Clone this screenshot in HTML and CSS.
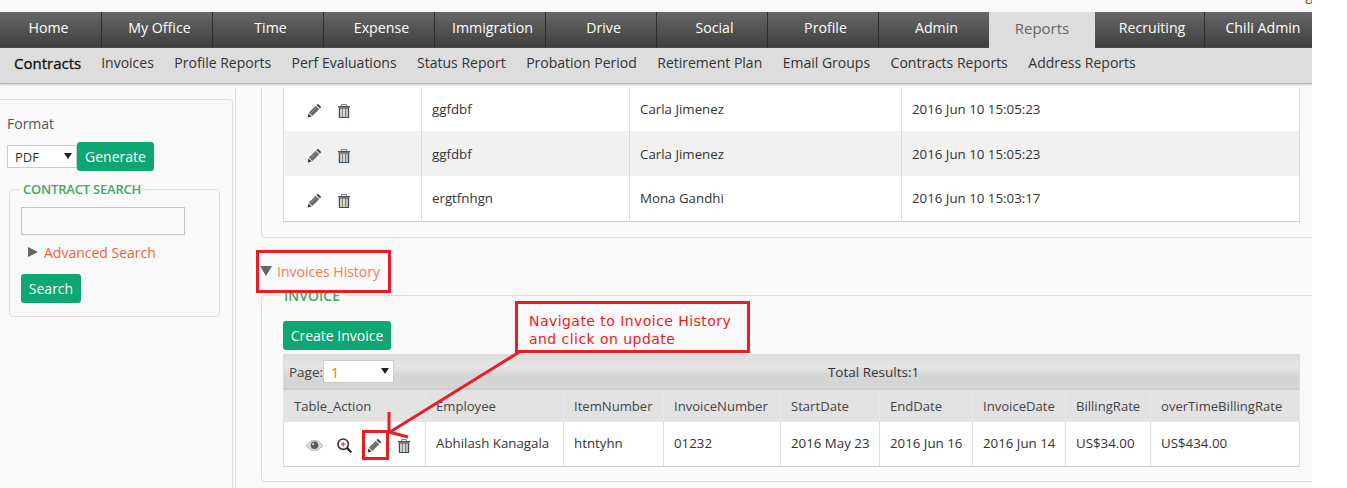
FILE: index.html
```html
<!DOCTYPE html>
<html lang="en">
<head>
    <meta charset="UTF-8">
    <title>Reports - Contracts</title>
    <link rel="stylesheet" href="styles.css">
</head>
<body>
    <svg class="icon-defs" width="0" height="0">
        <symbol id="i-pencil" viewBox="0 0 14 14">
            <path d="M.6 13.400l.9-4 3.100 3.100z" fill="#333"/>
            <path d="M1.900 8.600l6.800-6.800 3.500 3.500-6.800 6.800z" fill="#6a6a6a"/>
            <path d="M3.400 9.400l6-6" stroke="#999" stroke-width=".8"/>
            <path d="M9.400 1.100l.6-.6a1.200 1.200 0 0 1 1.700 0l1.800 1.800a1.200 1.200 0 0 1 0 1.700l-.6.6z" fill="#3a4350"/>
        </symbol>
        <symbol id="i-trash" viewBox="0 0 14 14">
            <path d="M4.600 2V.6h4.800V2" fill="none" stroke="#777" stroke-width="1"/>
            <path d="M1 2h12v1.500H1z" fill="#555"/>
            <path d="M1.800 3.500h10.400V14H1.800z" fill="#34506e"/>
            <path d="M3 4.500h2.400V13H3z" fill="#e0cc98"/>
            <path d="M5.900 4.500h2.200V13H5.900z" fill="#d6d6d6"/>
            <path d="M8.600 4.500H11V13H8.600z" fill="#c4bea6"/>
        </symbol>
        <symbol id="i-eye" viewBox="0 0 17 11">
            <path d="M.5 5.500C3 1.500 6 .5 8.500 .5s5.500 1 8 5c-2.500 4-5.500 5-8 5s-5.500-1-8-5z" fill="#ddd" stroke="#aaa"/>
            <circle cx="8.500" cy="5.300" r="3.800" fill="#5a5a5a"/>
            <circle cx="7.200" cy="4.100" r="1.100" fill="#ddd"/>
        </symbol>
        <symbol id="i-zoom" viewBox="0 0 15 15">
            <circle cx="6.200" cy="6.200" r="5.200" fill="#fff" stroke="#333" stroke-width="1.600"/>
            <path d="M10 10l4.300 4.300" stroke="#222" stroke-width="2.200"/>
            <path d="M4 6.200h4.400M6.200 4v4.400" stroke="#a04a80" stroke-width="1.200"/>
        </symbol>
    </svg>

    <div class="page">
        <div class="top-strip"><span class="logout">Log</span></div>

        <nav class="main-nav">
            <a class="tab">Home</a>
            <a class="tab">My Office</a>
            <a class="tab">Time</a>
            <a class="tab">Expense</a>
            <a class="tab">Immigration</a>
            <a class="tab">Drive</a>
            <a class="tab">Social</a>
            <a class="tab">Profile</a>
            <a class="tab">Admin</a>
            <a class="tab active">Reports</a>
            <a class="tab">Recruiting</a>
            <a class="tab">Chili Admin</a>
        </nav>

        <nav class="sub-nav">
            <a class="sub-item current">Contracts</a>
            <a class="sub-item">Invoices</a>
            <a class="sub-item">Profile Reports</a>
            <a class="sub-item">Perf Evaluations</a>
            <a class="sub-item">Status Report</a>
            <a class="sub-item">Probation Period</a>
            <a class="sub-item">Retirement Plan</a>
            <a class="sub-item">Email Groups</a>
            <a class="sub-item">Contracts Reports</a>
            <a class="sub-item">Address Reports</a>
        </nav>

        <div class="content">
            <aside class="sidebar">
                <div class="side-box">
                    <div class="format-label">Format</div>
                    <div class="format-row">
                        <label class="select format-select">
                            <select><option>PDF</option></select>
                        </label>
                        <button class="btn generate">Generate</button>
                    </div>
                    <fieldset class="search-box">
                        <legend>CONTRACT SEARCH</legend>
                        <input type="text" class="search-input">
                        <div class="advanced"><span class="arrow-right"></span><a class="link">Advanced Search</a></div>
                        <button class="btn search-btn">Search</button>
                    </fieldset>
                </div>
            </aside>

            <main class="main">
                <section class="panel panel-top">
                    <table class="grid top-grid">
                        <tbody>
                            <tr>
                                <td class="actions"><svg class="icon first"><use href="#i-pencil"/></svg><svg class="icon"><use href="#i-trash"/></svg></td>
                                <td>ggfdbf</td>
                                <td>Carla Jimenez</td>
                                <td>2016 Jun 10 15:05:23</td>
                            </tr>
                            <tr class="alt">
                                <td class="actions"><svg class="icon first"><use href="#i-pencil"/></svg><svg class="icon"><use href="#i-trash"/></svg></td>
                                <td>ggfdbf</td>
                                <td>Carla Jimenez</td>
                                <td>2016 Jun 10 15:05:23</td>
                            </tr>
                            <tr>
                                <td class="actions"><svg class="icon first"><use href="#i-pencil"/></svg><svg class="icon"><use href="#i-trash"/></svg></td>
                                <td>ergtfnhgn</td>
                                <td>Mona Gandhi</td>
                                <td>2016 Jun 10 15:03:17</td>
                            </tr>
                        </tbody>
                    </table>
                </section>

                <h3 class="history-title"><span class="arrow-down"></span><a class="link history-link">Invoices History</a></h3>

                <fieldset class="panel panel-invoice">
                    <legend>INVOICE</legend>
                    <button class="btn create">Create Invoice</button>
                    <div class="pager">
                        <span class="page-label">Page:</span>
                        <label class="select page-select">
                            <select><option>1</option></select>
                        </label>
                        <span class="total">Total Results:1</span>
                    </div>
                    <table class="grid invoice-grid">
                        <thead>
                            <tr>
                                <th>Table_Action</th>
                                <th>Employee</th>
                                <th>ItemNumber</th>
                                <th>InvoiceNumber</th>
                                <th>StartDate</th>
                                <th>EndDate</th>
                                <th>InvoiceDate</th>
                                <th>BillingRate</th>
                                <th>overTimeBillingRate</th>
                            </tr>
                        </thead>
                        <tbody>
                            <tr>
                                <td class="actions row-icons">
                                    <svg class="icon eye"><use href="#i-eye"/></svg>
                                    <svg class="icon zoom"><use href="#i-zoom"/></svg>
                                    <svg class="icon"><use href="#i-pencil"/></svg>
                                    <svg class="icon"><use href="#i-trash"/></svg>
                                </td>
                                <td>Abhilash Kanagala</td>
                                <td>htntyhn</td>
                                <td>01232</td>
                                <td>2016 May 23</td>
                                <td>2016 Jun 16</td>
                                <td>2016 Jun 14</td>
                                <td>US$34.00</td>
                                <td>US$434.00</td>
                            </tr>
                        </tbody>
                    </table>
                </fieldset>
            </main>
        </div>

        <!-- annotations drawn on top of the screenshot -->
        <div class="mark mark-title"></div>
        <div class="mark mark-pencil"></div>
        <div class="callout">Navigate to Invoice History<br>and click on update</div>
        <svg class="pointer" width="1347" height="488">
            <path d="M521 351L390 432M389 412V432L408 437" fill="none" stroke="#ed1c24" stroke-width="3"/>
        </svg>
    </div>
</body>
</html>
```

FILE: styles.css
```css
* { box-sizing: border-box; }
html, body { margin: 0; height: 100%; background: #fff; overflow: hidden; }
body { font-family: "Open Sans", "Liberation Sans", sans-serif; font-size: 13px; color: #333; }
.icon-defs { position: absolute; }

.page { position: relative; width: 1312px; height: 488px; background: #f9f9f9; overflow: hidden; }
.top-strip { height: 12px; display: flex; justify-content: flex-end; overflow: hidden; }
.logout { color: #d9261c; font-size: 14px; margin-top: -15px; margin-right: -1px; }

/* main tabs */
.main-nav { display: grid; grid-template-columns: 101px repeat(8, 111px) 106px 109px 108px; height: 36px; }
.tab { display: flex; align-items: center; justify-content: center; padding: 0 0 6px 5px; color: #fff; font-size: 14.200px; background: linear-gradient(#676767, #3e3e3e); border-left: 1px solid #2e2e2e; }
.tab:first-child { border-left: none; padding: 0 4px 6px 0; }
.tab:last-child { padding-left: 9px; }
.tab.active { background: #ddd; color: #666; font-size: 15px; border-left: none; padding: 0 0 4px 0; }
.tab.active + .tab { border-left: none; }

/* sub navigation */
.sub-nav { display: flex; align-items: center; gap: 20.500px; height: 36px; padding: 0 0 6px 14px; background: #ddd; border-bottom: 1px solid #bbb; box-shadow: 0 1px 2px #ccc; font-size: 14px; color: #333; position: relative; }
.sub-item.current { font-size: 15px; color: #111; -webkit-text-stroke: 0.300px #111; margin-right: -0.500px; }

.content { display: flex; height: 404px; }

/* left column */
.sidebar { width: 235px; flex: none; padding-top: 15px; }
.side-box { width: 233px; height: 400px; border: 1px solid #ddd; border-left: none; border-radius: 0 4px 0 0; padding: 14px 0 0 7px; }
.format-label { font-size: 14px; color: #555; line-height: 20px; margin-bottom: 8px; }
.format-row { display: flex; align-items: center; }

.select { position: relative; display: block; }
.select select { appearance: none; width: 100%; height: 100%; padding: 0 0 0 7px; border: 1px solid #ccc; background: #fff; border-radius: 0; font-family: inherit; font-size: 13px; color: #333; }
.select::after { content: ""; position: absolute; top: 8px; right: 5px; border: 4px solid transparent; border-top: 6px solid #222; border-bottom: none; }
.format-select { width: 70px; height: 23px; }

.btn { border: none; border-radius: 3px; background: #0ea673; color: #fff; font-family: inherit; font-size: 14px; padding: 0; }
.generate { width: 77px; height: 29px; }

.search-box { width: 211px; height: 137px; margin: 9px 0 0 2px; padding: 0 0 0 11px; border: 1px solid #ddd; border-radius: 4px; }
.search-box legend { margin-left: -1px; padding: 0 3px; font-size: 13px; font-weight: 600; color: #4aa564; letter-spacing: -0.200px; line-height: 18px; }
.search-input { display: block; width: 164px; height: 28px; margin-top: 9px; background: #f9f9f9; border: 1px solid #c4c4c4; }
.advanced { display: flex; align-items: center; height: 20px; margin-top: 7px; padding-left: 7px; font-size: 14px; }
.arrow-right { border: 5px solid transparent; border-left: 10px solid #666; border-right: none; margin-right: 6px; }
.link { color: #f0623e; }
.search-btn { display: block; width: 60px; height: 29px; margin-top: 12px; }

/* main column */
.main { width: 1077px; flex: none; margin-top: 4px; padding-left: 25px; border-left: 1px solid #ddd; }
.panel { display: block; border: 1px solid #ddd; border-right: none; padding: 0 0 0 21px; margin: 0; min-width: 0; }
.panel-top { height: 150px; border-top: none; border-radius: 0 0 0 4px; overflow: hidden; }

.grid { border-collapse: collapse; table-layout: fixed; width: 1017px; background: #fff; font-size: 13.300px; color: #333; }
.grid td { border: 1px solid #ddd; padding: 0 10px; white-space: nowrap; }
.top-grid { margin-top: -2px; }
.top-grid tr { height: 45px; }
.top-grid td:first-child { width: 138px; }
.top-grid td:nth-child(2) { width: 208px; }
.top-grid td:nth-child(3) { width: 272px; }
.top-grid td { border-top: none; border-bottom-color: #ccc; }
.top-grid tr:not(:last-child) td { border-bottom: none; }
.top-grid .alt td { background: #f1f1f1; }
.actions .icon { width: 14px; height: 14px; vertical-align: middle; margin-top: 5px; }
.top-grid .first { margin: 5px 16px 0 13px; }

.history-title { display: flex; align-items: center; height: 56px; margin: 0 0 0 -1px; padding-top: 10px; font-size: 14px; font-weight: 400; }
.arrow-down { border: 6px solid transparent; border-top: 10px solid #666; border-bottom: none; margin-right: 5px; }
.history-link { color: #f47b55; }

.panel-invoice { height: 188px; padding-top: 0; border-radius: 4px 0 0 4px; }
.panel-invoice legend { padding: 0 5px 0 3px; margin-left: -2px; font-size: 14px; font-weight: 600; color: #4aa564; line-height: 3px; height: 3px; }
.create { display: block; width: 108px; height: 29px; margin-top: 24px; }

.pager { display: flex; align-items: center; width: 1017px; height: 36px; margin-top: 4px; padding-left: 5px; font-size: 13.500px; background: linear-gradient(#dcdcdc, #e6e6e6 35%, #d6d6d6 60%, #d4d4d4); border: 1px solid #ddd; border-bottom: 2px solid #ccc; }
.page-label { color: #444; }
.page-select { width: 71px; height: 23px; }
.page-select select { color: #c98a1a; font-size: 14px; padding-top: 2px; }
.total { flex: 1; text-align: center; padding: 0 0 0 54px; font-size: 13.500px; color: #333; }

.invoice-grid th { height: 31px; background: #e2e2e2; border: 1px solid #e8e8e8; border-top: none; font-weight: 400; font-size: 13.100px; color: #444; text-align: left; padding: 2px 10px 0; white-space: nowrap; overflow: hidden; }
.invoice-grid td { height: 45px; padding-bottom: 2px; border-color: #ddd; border-bottom-color: #ccc; }
.invoice-grid th:nth-child(1) { width: 142px; }
.invoice-grid th:nth-child(2) { width: 138px; }
.invoice-grid th:nth-child(3) { width: 100px; }
.invoice-grid th:nth-child(4) { width: 117px; }
.invoice-grid th:nth-child(5) { width: 99px; }
.invoice-grid th:nth-child(6) { width: 93px; }
.invoice-grid th:nth-child(7) { width: 93px; }
.invoice-grid th:nth-child(8) { width: 85px; }
.row-icons { font-size: 0; padding-left: 22px !important; }
.row-icons .icon { margin-right: 16px; margin-top: 6px; }
.row-icons .eye { width: 17px; height: 11px; margin-right: 14px; }
.row-icons .zoom { width: 15px; height: 15px; margin-right: 15px; }

/* annotations */
.mark { position: absolute; border: 3px solid #ed1c24; }
.mark-title { left: 256px; top: 250px; width: 135px; height: 43px; }
.mark-pencil { left: 362px; top: 430px; width: 27px; height: 30px; }
.callout { position: absolute; left: 515px; top: 301px; width: 235px; height: 52px; padding: 8px 0 0 11px; border: 3px solid #ed1c24; background: #f9f9f9; color: #ed1c24; font-family: "DejaVu Sans", sans-serif; font-size: 14px; line-height: 18px; letter-spacing: 0.450px; white-space: nowrap; }
.pointer { position: absolute; left: 0; top: 0; pointer-events: none; }
```
